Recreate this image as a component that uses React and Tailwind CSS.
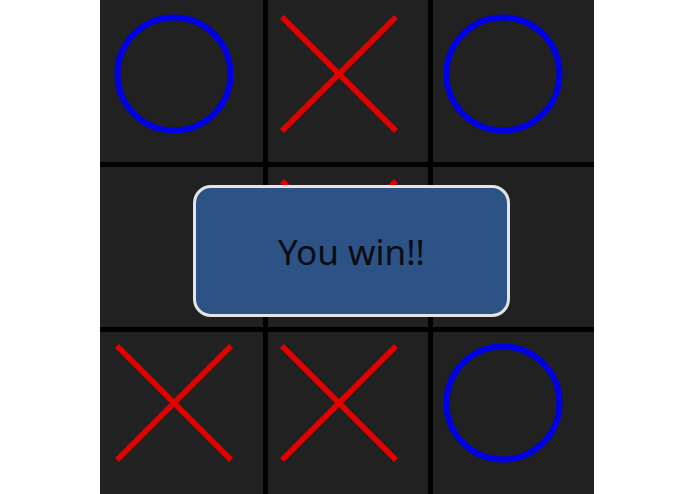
import React from "react";

const O = () => (
  <svg width="124" height="124" viewBox="0 0 124 124" className="block">
    <circle cx="62" cy="62" r="56.5" fill="none" stroke="#0000e8" strokeWidth="6" />
  </svg>
);

const X = () => (
  <svg width="124" height="124" viewBox="0 0 124 124" className="block">
    <line x1="5" y1="5" x2="119" y2="119" stroke="#e50000" strokeWidth="5.5" />
    <line x1="119" y1="5" x2="5" y2="119" stroke="#e50000" strokeWidth="5.5" />
  </svg>
);

export default function App() {
  const cell = "bg-[#212121]";
  return (
    <div className="w-[695px] h-[494px] bg-white overflow-hidden">
      <div className="relative ml-[100px] w-[494px] h-[494px] bg-black grid grid-cols-[163px_160px_161px] grid-rows-[162px_160px_162px] gap-[5px]">
        <div className={`${cell} pl-[12px] pt-[12px]`}><O /></div>
        <div className={`${cell} pl-[9px] pt-[12px]`}><X /></div>
        <div className={`${cell} pl-[8px] pt-[12px]`}><O /></div>

        <div className={cell}></div>
        <div className={`${cell} pl-[9px] pt-[9px]`}><X /></div>
        <div className={cell}></div>

        <div className={`${cell} pl-[12px] pt-[9px]`}><X /></div>
        <div className={`${cell} pl-[9px] pt-[9px]`}><X /></div>
        <div className={`${cell} pl-[8px] pt-[9px]`}><O /></div>

        <div className="absolute left-[93px] top-[185px] w-[317px] h-[132px] rounded-[18px] border-[3px] border-[#e4e4e4] bg-[#2c5286] flex items-center justify-center">
          <span className="text-[35px] leading-none text-[#0a0c14]" style={{ fontFamily: '"Noto Sans", sans-serif' }}>
            You win!!
          </span>
        </div>
      </div>
    </div>
  );
}
